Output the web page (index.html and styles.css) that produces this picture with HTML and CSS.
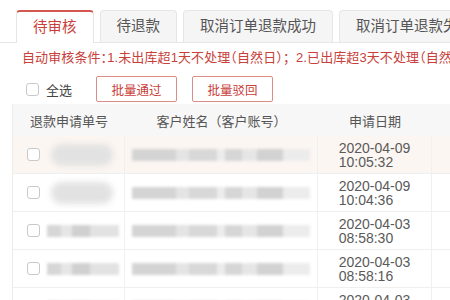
FILE: index.html
```html
<!DOCTYPE html>
<html lang="zh">
<head>
<meta charset="utf-8">
<link rel="stylesheet" href="styles.css">
</head>
<body>
<div class="page">
  <div class="tabs">
    <div class="tab active">待审核</div>
    <div class="tab">待退款</div>
    <div class="tab">取消订单退款成功</div>
    <div class="tab">取消订单退款失败</div>
  </div>
  <div class="notice">自动审核条件：1.未出库超1天不处理（自然日）<span class="fullw">；</span>2.已出库超3天不处理（自然日）</div>
  <div class="toolbar">
    <label class="selall"><span class="cb"></span>全选</label>
    <button class="btn">批量通过</button>
    <button class="btn">批量驳回</button>
  </div>
  <div class="table">
    <div class="row head">
      <div class="cell">退款申请单号</div>
      <div class="cell">客户姓名（客户账号）</div>
      <div class="cell">申请日期</div>
      <div class="cell"></div>
    </div>
    <div class="row hl">
      <div class="cell c1"><span class="cb"></span><span class="blob"></span></div>
      <div class="cell c2"><span class="bar"></span></div>
      <div class="cell date">2020-04-09<br>10:05:32</div>
      <div class="cell"></div>
    </div>
    <div class="row">
      <div class="cell c1"><span class="cb"></span><span class="blob"></span></div>
      <div class="cell c2"><span class="bar"></span></div>
      <div class="cell date">2020-04-09<br>10:04:36</div>
      <div class="cell"></div>
    </div>
    <div class="row">
      <div class="cell c1"><span class="cb"></span><span class="bar1"></span></div>
      <div class="cell c2"><span class="bar"></span></div>
      <div class="cell date">2020-04-03<br>08:58:30</div>
      <div class="cell"></div>
    </div>
    <div class="row">
      <div class="cell c1"><span class="cb"></span><span class="bar1"></span></div>
      <div class="cell c2"><span class="bar"></span></div>
      <div class="cell date">2020-04-03<br>08:58:16</div>
      <div class="cell"></div>
    </div>
    <div class="row">
      <div class="cell c1"><span class="cb"></span><span class="bar1"></span></div>
      <div class="cell c2"><span class="bar"></span></div>
      <div class="cell date">2020-04-03<br>08:57:50</div>
      <div class="cell"></div>
    </div>
  </div>
</div>
</body>
</html>
```

FILE: styles.css
```css
html, body {
  margin: 0;
  padding: 0;
  background: #fff;
  overflow: hidden;
}
body {
  font-family: "Liberation Sans", "Noto Sans CJK SC", sans-serif;
  color: #555;
}
.page {
  width: 450px;
  height: 300px;
  overflow: hidden;
  padding-top: 10px;
  box-sizing: border-box;
}
.tabs {
  display: flex;
  gap: 6px;
  padding-left: 16px;
  border-bottom: 1px solid #e6e6e6;
  white-space: nowrap;
  height: 32px;
}
.tab {
  flex: none;
  height: 32px;
  box-sizing: border-box;
  padding: 0 16px;
  font-size: 14.5px;
  line-height: 31px;
  color: #555;
  background: #f5f5f5;
  border: 1px solid #e6e6e6;
  border-bottom: none;
  border-radius: 4px 4px 0 0;
}
.tab.active {
  background: #fff;
  color: #c8403a;
  border-top: 2px solid #d2574f;
  line-height: 30px;
  height: 33px;
  margin-bottom: -1px;
}
.notice {
  margin-top: 7px;
  padding-left: 22px;
  font-size: 13px;
  font-feature-settings: "halt";
  letter-spacing: 0.1px;
  line-height: 16px;
  color: #c8403a;
  white-space: nowrap;
}
.notice .fullw {
  font-feature-settings: normal;
}
.toolbar {
  display: flex;
  align-items: center;
  height: 26px;
  margin-top: 10px;
  padding-left: 26px;
}
.selall {
  display: flex;
  align-items: center;
  font-size: 13px;
  color: #444;
  width: 70px;
}
.cb {
  display: inline-block;
  width: 11px;
  height: 11px;
  border: 1px solid #c9c9c9;
  border-radius: 3px;
  background: #fff;
  margin-right: 7px;
  flex: none;
}
.btn {
  height: 26px;
  width: 81px;
  box-sizing: border-box;
  border: 1px solid #dc8c86;
  border-radius: 2px;
  background: #fff;
  color: #c8403a;
  font-family: inherit;
  font-size: 12.5px;
  padding: 0;
  margin-right: 15px;
}
.table {
  margin-top: 2px;
  margin-left: 12px;
  border-left: 1px solid #ececec;
  width: 480px;
}
.row {
  display: grid;
  grid-template-columns: 112px 193px 114px 1fr;
  height: 38px;
  border-bottom: 1px solid #efefef;
  box-sizing: border-box;
}
.row.head {
  height: 32px;
  background: #f7f7f7;
  border-bottom: none;
}
.row.hl {
  background: #fcf6f2;
}
.cell {
  display: flex;
  align-items: center;
  justify-content: center;
  font-size: 13px;
  color: #555;
  border-right: 1px solid #f0f0f0;
  overflow: hidden;
}
.head .cell {
  border-right: none;
}
.cell.c1 {
  justify-content: flex-start;
  padding-left: 14px;
}
.cell.c2 {
  justify-content: flex-start;
  padding-left: 7px;
}
.cell.date {
  flex-direction: column;
  line-height: 14px;
  font-size: 14px;
  color: #5a5a5a;
}
.blob {
  display: block;
  width: 62px;
  height: 22px;
  border-radius: 12px;
  background: #e2e2e2;
  filter: blur(3px);
  margin-left: 4px;
}
.bar1 {
  display: block;
  width: 72px;
  height: 12px;
  background: linear-gradient(90deg, #d6d6d6 0 20%, #e6e6e6 20% 35%, #d0d0d0 35% 60%, #e2e2e2 60% 100%);
  filter: blur(1.5px);
  margin-left: 0;
}
.bar {
  display: block;
  width: 178px;
  height: 12px;
  background: linear-gradient(90deg, #d4d4d4 0 25%, #e4e4e4 25% 32%, #d8d8d8 32% 48%, #ececec 48% 52%, #d6d6d6 52% 62%, #e6e6e6 62% 70%, #d2d2d2 70% 85%, #ececec 85% 100%);
  filter: blur(1.5px);
}
```
